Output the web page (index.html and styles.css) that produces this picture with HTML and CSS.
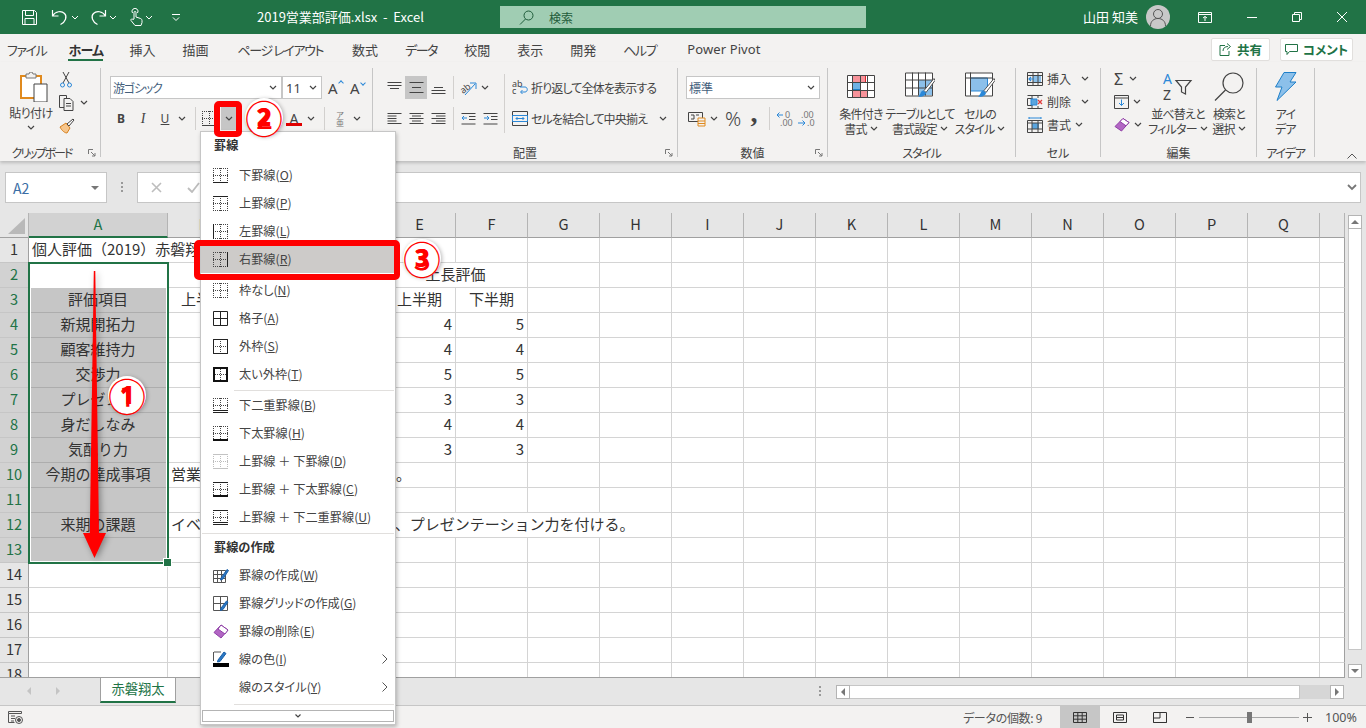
FILE: index.html
```html
<!DOCTYPE html>
<html lang="ja">
<head>
    <meta charset="UTF-8">
    <meta name="viewport" content="width=device-width, initial-scale=1.0">
    <title>2019営業部評価.xlsx - Excel</title>
    <link rel="stylesheet" href="styles.css">
</head>
<body>
<svg class="defs" width="0" height="0">
    <symbol id="chev" viewBox="0 0 8 5"><path d="M1 1l3 3 3-3" fill="none" stroke="#444" stroke-width="1.2"/></symbol>
    <symbol id="launch" viewBox="0 0 8 8"><path d="M.5 5V.5H5M3 3l4 4M7 4v3H4" fill="none" stroke="#777" stroke-width="1"/></symbol>
    <symbol id="dots" viewBox="0 0 15 15"><path d="M0 .5h15M0 14.500h15M.5 0v15M14.500 0v15M7.500 0v15M0 7.500h15" fill="none" stroke="#444" stroke-width="1" stroke-dasharray="1 1"/></symbol>
    <symbol id="alignlines" viewBox="0 0 15 12"><path d="M.5 .5h14M3 5.500h9M.5 10.500h14" fill="none" stroke="#444"/></symbol>
</svg>

<div class="app">
    <header class="titlebar">
        <div class="qat">
            <svg class="qat-save" width="17" height="17" viewBox="0 0 17 17" fill="none" stroke="#fff"><path d="M1.500 1.500h12l2 2v12h-14zM4.500 1.500v5h8v-5M4 15.500v-6h9v6"/></svg>
            <svg class="qat-undo" width="18" height="17" viewBox="0 0 18 17" fill="none" stroke="#fff" stroke-width="1.200"><path d="M1.500 1v6h6M1.500 7c3-5 9-5.500 12-2.500s1 8.500-4 11"/></svg>
            <svg class="caret qat-caret" width="8" height="5"><path d="M1 1l3 3 3-3" fill="none" stroke="#fff"/></svg>
            <svg class="qat-redo" width="18" height="17" viewBox="0 0 18 17" fill="none" stroke="#fff" stroke-width="1.200"><path d="M16.500 1v6h-6M16.500 7c-3-5-9-5.500-12-2.500s-1 8.500 4 11"/></svg>
            <svg class="caret qat-caret" width="8" height="5"><path d="M1 1l3 3 3-3" fill="none" stroke="#fff"/></svg>
            <svg class="qat-touch" width="14" height="18" viewBox="0 0 14 18" fill="none" stroke="#fff"><path d="M3.500 5a3 3 0 1 1 5 0M5 11V4.500a1 1 0 0 1 2 0V9l4.500 1.500c1 .5 1.500 1 1.500 2v2l-1 3H6l-4-5c-.5-1.500 1-2 2-1z"/></svg>
            <svg class="caret qat-caret" width="8" height="5"><path d="M1 1l3 3 3-3" fill="none" stroke="#fff"/></svg>
            <svg class="qat-custom" width="8" height="7" viewBox="0 0 8 7" fill="none" stroke="#fff"><path d="M0 .5h8M1 3.500l3 3 3-3"/></svg>
        </div>
        <div class="doc-title">2019営業部評価.xlsx &nbsp;- &nbsp;Excel</div>
        <div class="searchbox">
            <svg width="15" height="15" viewBox="0 0 15 15" fill="none" stroke="#1f5c3a"><circle cx="9.500" cy="5.500" r="4.500"/><path d="M6.500 9l-5.500 5.500"/></svg>
            <span>検索</span>
        </div>
        <div class="user">山田 知美</div>
        <div class="avatar">
            <svg width="24" height="24" viewBox="0 0 24 24" fill="none" stroke="#555"><circle cx="12" cy="9" r="4.500"/><path d="M4.500 21c0-5 3.500-7.500 7.500-7.500s7.500 2.500 7.500 7.500"/></svg>
        </div>
        <div class="winbtns">
            <svg width="14" height="11" viewBox="0 0 14 11" fill="none" stroke="#fff"><path d="M.5 .5h13v10H.5zM.5 2.500h13M7 9V4.500M5 6l2-1.500L9 6"/></svg>
            <svg width="10" height="1" viewBox="0 0 10 1" stroke="#fff"><path d="M0 .5h10"/></svg>
            <svg width="10" height="10" viewBox="0 0 10 10" fill="none" stroke="#fff"><path d="M.5 2.500h7v7h-7zM2.500 2.500v-2h7v7h-2"/></svg>
            <svg width="10" height="10" viewBox="0 0 10 10" fill="none" stroke="#fff"><path d="M0 0l10 10M10 0L0 10"/></svg>
        </div>
    </header>

    <nav class="tabs">
        <span class="tab kana">ファイル</span>
        <span class="tab active">ホーム</span>
        <span class="tab">挿入</span>
        <span class="tab">描画</span>
        <span class="tab kana pad2">ページ レイアウト</span>
        <span class="tab pad2">数式</span>
        <span class="tab kana">データ</span>
        <span class="tab">校閲</span>
        <span class="tab">表示</span>
        <span class="tab">開発</span>
        <span class="tab kana">ヘルプ</span>
        <span class="tab latin">Power Pivot</span>
        <div class="tab-actions">
            <button class="action share">
                <svg width="13" height="13" viewBox="0 0 13 13" fill="none" stroke="#217346"><path d="M6 2.500H1v10h9V8M4 8c0-3 2-4.500 5-4.500M8 .5l3.500 3L8 6.500"/></svg>
                共有
            </button>
            <button class="action comment">
                <svg width="13" height="13" viewBox="0 0 13 13" fill="none" stroke="#217346"><path d="M.5 1.500h12v7H4.500l-2.500 3v-3H.5z"/></svg>
                コメント
            </button>
        </div>
    </nav>

    <section class="ribbon">
        <div class="group g-clip">
            <div class="group-body clip-body">
                <div class="paste">
                    <svg class="paste-icon" width="28" height="30" viewBox="0 0 28 30" fill="none"><path d="M1 4h20v22H1z" fill="#fff" stroke="#e08a1e" stroke-width="2"/><path d="M6 4V2h3l1-2h2l1 2h3v4H6z" fill="#f3f2f1" stroke="#777"/><path d="M14 12h13v18H14z" fill="#fff" stroke="#444"/></svg>
                    <span class="lbl">貼り付け</span>
                    <svg class="caret" width="8" height="5"><use href="#chev"/></svg>
                </div>
                <div class="clip-side">
                    <div class="row-s"><svg width="14" height="16" viewBox="0 0 14 16" fill="none" stroke="#444"><path d="M4 0l6 11M10 0L4 11"/><circle cx="3.500" cy="13" r="2" stroke="#2b88d8"/><circle cx="10.500" cy="13" r="2" stroke="#2b88d8"/></svg></div>
                    <div class="row-s"><svg width="16" height="16" viewBox="0 0 16 16" fill="none" stroke="#444"><path d="M5 12.500H.5V.5h7v3M5 3.500h6l3 3v9H5zM7 8.500h5M7 11h5"/></svg><svg class="caret copy-caret" width="8" height="5"><use href="#chev"/></svg></div>
                    <div class="row-s"><svg width="16" height="16" viewBox="0 0 16 16" fill="none"><path d="M1 9l6-4 4 5-3 5c-2 0-5-2-7-6z" fill="#f6c58b" stroke="#d67f1c"/><path d="M8 6l6-5 1 1-5 6z" fill="#fff" stroke="#444"/></svg></div>
                </div>
            </div>
            <div class="group-label clip-label">クリップボード</div>
            <svg class="launcher" width="8" height="8"><use href="#launch"/></svg>
        </div>

        <div class="group g-font">
            <div class="group-body">
                <div class="rrow">
                    <div class="combo font-name"><span class="blue kana-t">游ゴシック</span><svg class="caret" width="8" height="5"><use href="#chev"/></svg></div>
                    <div class="combo font-size"><span>11</span><svg class="caret" width="8" height="5"><use href="#chev"/></svg></div>
                    <div class="grow-a">A<i class="up"></i></div>
                    <div class="grow-a small-a">A<i class="down"></i></div>
                </div>
                <div class="rrow font-row2">
                    <span class="btn serif-b">B</span>
                    <span class="btn serif-i">I</span>
                    <span class="btn under-u">U</span>
                    <span class="btn-c"><svg width="8" height="5"><use href="#chev"/></svg></span>
                    <span class="vsep sep-a"></span>
                    <span class="btn border-btn"><svg width="15" height="15"><use href="#dots"/><path d="M0 14.500h15" stroke="#444"/></svg></span>
                    <span class="border-drop"><svg width="8" height="5"><use href="#chev"/></svg></span>
                    <span class="btn fill-btn"><svg width="16" height="16" viewBox="0 0 16 16" fill="none" stroke="#666"><path d="M2 8l6-6 6 6-5 5z"/><path d="M1 15h3" stroke="#f4d03f" stroke-width="2"/></svg></span>
                    <span class="btn-c fill-drop"><svg width="8" height="5"><use href="#chev"/></svg></span>
                    <span class="btn font-color">A</span>
                    <span class="btn-c color-drop"><svg width="8" height="5"><use href="#chev"/></svg></span>
                    <span class="vsep sep-b"></span>
                    <span class="btn phonetic"><span>ア</span><span>亜</span></span>
                    <span class="btn-c"><svg width="8" height="5"><use href="#chev"/></svg></span>
                </div>
            </div>
            <div class="group-label">&nbsp;</div>
        </div>

        <div class="group g-align">
            <div class="group-body align-body">
                <div class="align-left">
                    <div class="rrow">
                        <span class="btn"><svg width="15" height="12" viewBox="0 0 15 12"><path d="M.5 .5h14M.5 3.500h14M3 6.500h9" fill="none" stroke="#444"/></svg></span>
                        <span class="btn on"><svg width="15" height="12"><use href="#alignlines"/></svg></span>
                        <span class="btn"><svg width="15" height="12" viewBox="0 0 15 12"><path d="M3 5.500h9M.5 8.500h14M.5 11.500h14" fill="none" stroke="#444"/></svg></span>
                        <span class="vsep sep-c"></span>
                        <span class="btn orient"><svg width="17" height="16" viewBox="0 0 17 16" fill="none"><text x="0" y="11" class="tiny" transform="rotate(-38 6 8)">ab</text><path d="M5 15L15 4M10 3h6v6" stroke="#2b88d8"/></svg></span>
                        <span class="btn-c"><svg width="8" height="5"><use href="#chev"/></svg></span>
                    </div>
                    <div class="rrow r2">
                        <span class="btn"><svg width="15" height="12" viewBox="0 0 15 12"><path d="M.5 .5h14M.5 5.500h9M.5 10.500h14M.5 3h9M.5 8h9" fill="none" stroke="#444"/></svg></span>
                        <span class="btn"><svg width="15" height="12" viewBox="0 0 15 12"><path d="M.5 .5h14M3 3h9M.5 5.500h14M3 8h9M.5 10.500h14" fill="none" stroke="#444"/></svg></span>
                        <span class="btn"><svg width="15" height="12" viewBox="0 0 15 12"><path d="M.5 .5h14M5 3h9.500M.5 5.500h14M5 8h9.500M.5 10.500h14" fill="none" stroke="#444"/></svg></span>
                        <span class="vsep sep-c"></span>
                        <span class="btn ind"><svg width="15" height="12" viewBox="0 0 15 12" fill="none"><path d="M.5 .5h14M8 3.500h6.500M8 6.500h6.500M.5 11h14" stroke="#444"/><path d="M6 5H1M3 3L1 5l2 2" stroke="#2b88d8"/></svg></span>
                        <span class="btn"><svg width="15" height="12" viewBox="0 0 15 12" fill="none"><path d="M.5 .5h14M8 3.500h6.500M8 6.500h6.500M.5 11h14" stroke="#444"/><path d="M1 5h5M4 3l2 2-2 2" stroke="#2b88d8"/></svg></span>
                    </div>
                </div>
                <span class="tallsep"></span>
                <div class="align-right">
                    <div class="rrow wrap-row">
                        <svg width="16" height="15" viewBox="0 0 16 15" fill="none"><text x="0" y="6.500" class="tiny">ab</text><text x="0" y="14" class="tiny">c</text><path d="M9 12h4c3 0 3-5 0-5H8M10.500 10L8.500 12l2 2" stroke="#2b88d8"/></svg>
                        <span class="lbl">折り返して全体を表示する</span>
                    </div>
                    <div class="rrow r2 wrap-row">
                        <svg width="16" height="15" viewBox="0 0 16 15" fill="none"><path d="M.5 .5h15v14H.5z" stroke="#444"/><path d="M.5 4.500h15v6H.5z" stroke="#2b88d8"/><path d="M4 7.500h8M5.500 6L4 7.500 5.500 9M10.500 6L12 7.500 10.500 9" stroke="#2b88d8"/></svg>
                        <span class="lbl">セルを結合して中央揃え</span>
                        <svg class="caret merge-caret" width="8" height="5"><use href="#chev"/></svg>
                    </div>
                </div>
            </div>
            <div class="group-label">配置</div>
            <svg class="launcher" width="8" height="8"><use href="#launch"/></svg>
        </div>

        <div class="group g-num">
            <div class="group-body">
                <div class="rrow"><div class="combo num-format"><span class="blue">標準</span><svg class="caret" width="8" height="5"><use href="#chev"/></svg></div></div>
                <div class="rrow r2 num-row2">
                    <span class="btn acct"><svg width="18" height="16" viewBox="0 0 18 16" fill="none"><path d="M.5 1.500h14v9H.5z" stroke="#444"/><path d="M3 4h3v4H3M8 4h3" stroke="#444"/><path d="M10 7h7v8h-7zM10 10h7M10 12.500h7" fill="#f3f2f1" stroke="#e08a1e"/></svg></span>
                    <span class="btn-c"><svg width="8" height="5"><use href="#chev"/></svg></span>
                    <span class="btn pct">%</span>
                    <span class="btn comma">,</span>
                    <span class="vsep sep-d"></span>
                    <span class="btn dec"><svg width="18" height="16" viewBox="0 0 18 16" fill="none"><path d="M7 4H1M3.500 1.500L1 4l2.500 2.500" stroke="#2b88d8"/><text x="9" y="7" class="tiny gray">0</text><text x="4" y="15" class="tiny gray">.00</text></svg></span>
                    <span class="btn dec"><svg width="18" height="16" viewBox="0 0 18 16" fill="none"><text x="4" y="7" class="tiny gray">.00</text><path d="M1 12h7M5.500 9.500L8 12l-2.500 2.500" stroke="#2b88d8"/><text x="10" y="15" class="tiny gray">.0</text></svg></span>
                </div>
            </div>
            <div class="group-label">数値</div>
            <svg class="launcher" width="8" height="8"><use href="#launch"/></svg>
        </div>

        <div class="group g-style">
            <div class="group-body bigs">
                <div class="big w-cond">
                    <svg width="28" height="23" viewBox="0 0 28 23" fill="none"><path d="M.5 .5h27v22H.5z" fill="#fff"/><path d="M5.500 .5h13v7h-13zM5.500 15.500h15v7h-15z" fill="#f7939a" stroke="#d9242c"/><path d="M5.500 7.500h8v7h-8z" fill="#6fb1e4" stroke="#1e7fc8"/><path d="M.5 .5h27v22H.5zM.5 7.500h27M.5 15.500h27M5.500 0v23M13.500 0v23M20.500 0v23" stroke="#444"/></svg>
                    <span>条件付き</span>
                    <span>書式<svg class="caret" width="8" height="5"><use href="#chev"/></svg></span>
                </div>
                <div class="big w-table">
                    <svg width="30" height="28" viewBox="0 0 30 28" fill="none"><path d="M.5 .5h27v23H.5z" fill="#fff"/><path d="M13 7.500h14v15H13z" fill="#8cc0ea"/><path d="M.5 .5h27v23H.5zM.5 7.500h27M.5 15.500h27M7.500 0v23M13.500 0v23M20.500 0v23" stroke="#444"/><path d="M29 6L19 18l2 2 9-12z" fill="#fff" stroke="#555"/><path d="M18 18c-3 1-2 4-5 6 4 1 8-1 8-4z" fill="#2b88d8"/></svg>
                    <span>テーブルとして</span>
                    <span>書式設定<svg class="caret" width="8" height="5"><use href="#chev"/></svg></span>
                </div>
                <div class="big w-cell">
                    <svg width="30" height="28" viewBox="0 0 30 28" fill="none"><path d="M.5 .5h27v23H.5z" fill="#fff"/><path d="M5.500 5.500h17v13h-17z" fill="#8cc0ea" stroke="#2b88d8"/><path d="M.5 .5h27v23H.5zM.5 5.500h27M5.500 0v23" stroke="#444"/><path d="M29 6L19 18l2 2 9-12z" fill="#fff" stroke="#555"/><path d="M18 18c-3 1-2 4-5 6 4 1 8-1 8-4z" fill="#2b88d8"/></svg>
                    <span>セルの</span>
                    <span>スタイル<svg class="caret" width="8" height="5"><use href="#chev"/></svg></span>
                </div>
            </div>
            <div class="group-label gk">スタイル</div>
        </div>

        <div class="group g-cell">
            <div class="group-body stack">
                <div class="srow">
                    <svg width="16" height="14" viewBox="0 0 16 14" fill="none"><path d="M6 3.500h8v7H6z" fill="#8cc0ea"/><path d="M.5 .5h15v13H.5zM.5 3.500h15M.5 10.500h15M6 0v14M11 0v14" stroke="#444"/><path d="M7 7H2M4 5L2 7l2 2" stroke="#2b88d8" stroke-width="1.200"/></svg>
                    <span class="lbl">挿入</span><svg class="caret cell-caret" width="8" height="5"><use href="#chev"/></svg>
                </div>
                <div class="srow">
                    <svg width="16" height="14" viewBox="0 0 16 14" fill="none"><path d="M.5 .5h15M.5 13.500h15M.5 3.500h5v7h-5zM5 0v3M5 11v3M11 0v3M11 11v3" stroke="#444"/><path d="M4 4h6v6H4z" fill="#5aa5de" stroke="#2b88d8"/><path d="M11 5l4 4M15 5l-4 4" stroke="#e03c3c" stroke-width="1.300"/></svg>
                    <span class="lbl">削除</span><svg class="caret cell-caret" width="8" height="5"><use href="#chev"/></svg>
                </div>
                <div class="srow">
                    <svg width="16" height="16" viewBox="0 0 16 16" fill="none"><path d="M5 6h7v6H5z" fill="#5aa5de"/><path d="M.5 3.500h15v12H.5zM.5 6h15M.5 12h15M5 3v13M11 3v13" stroke="#444"/><path d="M2 1h12M2 0v2M14 0v2" stroke="#2b88d8"/></svg>
                    <span class="lbl">書式</span><svg class="caret fmt-caret" width="8" height="5"><use href="#chev"/></svg>
                </div>
            </div>
            <div class="group-label">セル</div>
        </div>

        <div class="group g-edit">
            <div class="group-body edit-body">
                <div class="stack">
                    <div class="srow"><span class="sigma">Σ</span><svg class="caret sum-caret" width="8" height="5"><use href="#chev"/></svg></div>
                    <div class="srow"><svg width="15" height="14" viewBox="0 0 15 14" fill="none"><path d="M.5 .5h14v13H.5zM.5 3h14" stroke="#444"/><path d="M7.500 4.500v6M5 8l2.500 2.500L10 8" stroke="#2b88d8"/></svg><svg class="caret edit-caret" width="8" height="5"><use href="#chev"/></svg></div>
                    <div class="srow"><svg width="16" height="15" viewBox="0 0 16 15" fill="none"><path d="M1 9.500L9 1.500l6 4-7.500 8.500z" fill="#b266c4" stroke="#8f3ea6"/><path d="M6 4.500L9 1.500l6 4-3 3.300z" fill="#fff" stroke="#8f3ea6"/></svg><svg class="caret edit-caret" width="8" height="5"><use href="#chev"/></svg></div>
                </div>
                <div class="big w-sort">
                    <svg width="30" height="29" viewBox="0 0 30 29" fill="none"><text x="0" y="12" class="sort-a">A</text><text x="0" y="28" class="sort-z">Z</text><path d="M13 8.500h15l-5.500 6.500v7l-4 -2v-5z" stroke="#444" stroke-width="1.200"/></svg>
                    <span>並べ替えと</span>
                    <span>フィルター<svg class="caret" width="8" height="5"><use href="#chev"/></svg></span>
                </div>
                <div class="big w-find">
                    <svg width="30" height="29" viewBox="0 0 30 29" fill="none" stroke="#444" stroke-width="1.200"><circle cx="19" cy="11" r="10"/><path d="M11.500 18L1 28.500"/></svg>
                    <span>検索と</span>
                    <span>選択<svg class="caret" width="8" height="5"><use href="#chev"/></svg></span>
                </div>
            </div>
            <div class="group-label">編集</div>
        </div>

        <div class="group g-idea">
            <div class="group-body bigs idea-body">
                <div class="big w-idea">
                    <svg width="22" height="29" viewBox="0 0 22 29" fill="none"><path d="M9 .5h12L15 10h6L2 28.500 7 15H.5z" fill="#8cc0ea" stroke="#1e7fc8"/></svg>
                    <span>アイ</span>
                    <span>デア</span>
                </div>
            </div>
            <div class="group-label gk">アイデア</div>
        </div>
        <svg class="collapse" width="10" height="6" viewBox="0 0 10 6" fill="none" stroke="#555"><path d="M.5 5.500L5 1l4.500 4.500"/></svg>
    </section>

    <div class="formula">
        <div class="namebox"><span>A2</span><i class="tri-down"></i></div>
        <div class="fx-dots"></div>
        <div class="fx-input">
            <svg class="fx-x" width="11" height="11" viewBox="0 0 11 11" stroke="#bdbdbd" stroke-width="1.600"><path d="M1 1l9 9M10 1l-9 9"/></svg>
            <svg class="fx-ok" width="13" height="11" viewBox="0 0 13 11" fill="none" stroke="#bdbdbd" stroke-width="1.800"><path d="M1 6l4 4 7-9"/></svg>
            <svg class="fx-more" width="10" height="7" viewBox="0 0 10 7" fill="none" stroke="#777" stroke-width="1.800"><path d="M1 1l4 4 4-4"/></svg>
        </div>
    </div>

    <div class="sheet-wrap">
        <div class="sheet">
            <table class="grid">
                <colgroup><col class="c-h"><col class="c-a"><col span="16" class="c-n"><col class="c-r"></colgroup>
                <tr class="head"><th class="corner"><i></i></th><th class="hsel">A</th><th>B</th><th>C</th><th>D</th><th>E</th><th>F</th><th>G</th><th>H</th><th>I</th><th>J</th><th>K</th><th>L</th><th>M</th><th>N</th><th>O</th><th>P</th><th>Q</th><th></th></tr>
                <tr><th>1</th><td colspan="4">個人評価（2019）赤磐翔太</td><td></td><td></td><td></td><td></td><td></td><td></td><td></td><td></td><td></td><td></td><td></td><td></td><td></td><td></td></tr>
                <tr class="rsel"><th>2</th><td class="white"></td><td></td><td></td><td></td><td colspan="2" class="ctr">上長評価</td><td></td><td></td><td></td><td></td><td></td><td></td><td></td><td></td><td></td><td></td><td></td><td></td></tr>
                <tr class="rsel"><th>3</th><td class="ctr sel">評価項目</td><td class="ctr">上半期</td><td></td><td></td><td class="ctr">上半期</td><td class="ctr">下半期</td><td></td><td></td><td></td><td></td><td></td><td></td><td></td><td></td><td></td><td></td><td></td><td></td></tr>
                <tr class="rsel"><th>4</th><td class="ctr sel">新規開拓力</td><td></td><td></td><td></td><td class="num">4</td><td class="num">5</td><td></td><td></td><td></td><td></td><td></td><td></td><td></td><td></td><td></td><td></td><td></td><td></td></tr>
                <tr class="rsel"><th>5</th><td class="ctr sel">顧客維持力</td><td></td><td></td><td></td><td class="num">4</td><td class="num">4</td><td></td><td></td><td></td><td></td><td></td><td></td><td></td><td></td><td></td><td></td><td></td><td></td></tr>
                <tr class="rsel"><th>6</th><td class="ctr sel">交渉力</td><td></td><td></td><td></td><td class="num">5</td><td class="num">5</td><td></td><td></td><td></td><td></td><td></td><td></td><td></td><td></td><td></td><td></td><td></td><td></td></tr>
                <tr class="rsel"><th>7</th><td class="ctr sel">プレゼン力</td><td></td><td></td><td></td><td class="num">3</td><td class="num">3</td><td></td><td></td><td></td><td></td><td></td><td></td><td></td><td></td><td></td><td></td><td></td><td></td></tr>
                <tr class="rsel"><th>8</th><td class="ctr sel">身だしなみ</td><td></td><td></td><td></td><td class="num">4</td><td class="num">4</td><td></td><td></td><td></td><td></td><td></td><td></td><td></td><td></td><td></td><td></td><td></td><td></td></tr>
                <tr class="rsel"><th>9</th><td class="ctr sel">気配り力</td><td></td><td></td><td></td><td class="num">3</td><td class="num">3</td><td></td><td></td><td></td><td></td><td></td><td></td><td></td><td></td><td></td><td></td><td></td><td></td></tr>
                <tr class="rsel"><th>10</th><td class="ctr sel">今期の達成事項</td><td colspan="4">営業目標を達成し、新規開拓した。</td><td></td><td></td><td></td><td></td><td></td><td></td><td></td><td></td><td></td><td></td><td></td><td></td><td></td></tr>
                <tr class="rsel"><th>11</th><td class="sel"></td><td></td><td></td><td></td><td></td><td></td><td></td><td></td><td></td><td></td><td></td><td></td><td></td><td></td><td></td><td></td><td></td><td></td></tr>
                <tr class="rsel"><th>12</th><td class="ctr sel">来期の課題</td><td colspan="7">イベントなどに積極的に参加して、プレゼンテーション力を付ける。</td><td></td><td></td><td></td><td></td><td></td><td></td><td></td><td></td><td></td><td></td></tr>
                <tr class="rsel"><th>13</th><td class="sel"></td><td></td><td></td><td></td><td></td><td></td><td></td><td></td><td></td><td></td><td></td><td></td><td></td><td></td><td></td><td></td><td></td><td></td></tr>
                <tr><th>14</th><td></td><td></td><td></td><td></td><td></td><td></td><td></td><td></td><td></td><td></td><td></td><td></td><td></td><td></td><td></td><td></td><td></td><td></td></tr>
                <tr><th>15</th><td></td><td></td><td></td><td></td><td></td><td></td><td></td><td></td><td></td><td></td><td></td><td></td><td></td><td></td><td></td><td></td><td></td><td></td></tr>
                <tr><th>16</th><td></td><td></td><td></td><td></td><td></td><td></td><td></td><td></td><td></td><td></td><td></td><td></td><td></td><td></td><td></td><td></td><td></td><td></td></tr>
                <tr><th>17</th><td></td><td></td><td></td><td></td><td></td><td></td><td></td><td></td><td></td><td></td><td></td><td></td><td></td><td></td><td></td><td></td><td></td><td></td></tr>
                <tr><th>18</th><td></td><td></td><td></td><td></td><td></td><td></td><td></td><td></td><td></td><td></td><td></td><td></td><td></td><td></td><td></td><td></td><td></td><td></td></tr>
            </table>
            <div class="selection"><i></i></div>
        </div>
        <div class="vscroll">
            <span class="sbtn"><i class="tri-up"></i></span>
            <span class="vthumb"></span>
            <span class="sbtn"><i class="tri-down"></i></span>
        </div>
    </div>

    <div class="sheetbar">
        <div class="sheet-nav"><i class="tri-left"></i><i class="tri-right light"></i></div>
        <div class="sheet-tab">赤磐翔太</div>
        <div class="split-dots"></div>
        <div class="hscroll">
            <span class="sbtn"><i class="tri-left dark"></i></span>
            <span class="hthumb"></span>
            <span class="htrack"></span>
            <span class="sbtn"><i class="tri-right dark"></i></span>
        </div>
    </div>

    <footer class="status">
        <svg class="macro" width="15" height="13" viewBox="0 0 15 13" fill="none" stroke="#555"><path d="M.5 .5h13v2H.5zM.5 2.500v9h6M3 5h4M3 7.500h4M3 10h3"/><circle cx="11" cy="9" r="3.500"/><circle cx="11" cy="9" r="1.500" fill="#555"/></svg>
        <span class="count">データの個数: 9</span>
        <span class="view on"><svg width="14" height="11" viewBox="0 0 14 11" fill="none" stroke="#333"><path d="M.5 .5h13v10H.5zM.5 3.800h13M.5 7.200h13M4.800 0v11M9.200 0v11"/></svg></span>
        <span class="view"><svg width="14" height="11" viewBox="0 0 14 11" fill="none" stroke="#333"><path d="M.5 .5h13v10H.5zM3.500 3h7v5h-7zM3.500 5.500h7"/></svg></span>
        <span class="view"><svg width="14" height="11" viewBox="0 0 14 11" fill="none" stroke="#333"><path d="M.5 10.500v-10h13v10zM.5 10.500h13M7 .5V6H.5"/></svg></span>
        <span class="zoom-minus"></span>
        <span class="slider"><i></i></span>
        <span class="zoom-plus"></span>
        <span class="zoom-val">100%</span>
    </footer>

    <div class="menu">
        <div class="menu-head">罫線</div>
        <div class="mi"><svg width="15" height="15"><use href="#dots"/><path d="M0 14.500h15" stroke="#222"/></svg><span>下罫線(<u>O</u>)</span></div>
        <div class="mi"><svg width="15" height="15"><use href="#dots"/><path d="M0 .5h15" stroke="#222"/></svg><span>上罫線(<u>P</u>)</span></div>
        <div class="mi"><svg width="15" height="15"><use href="#dots"/><path d="M.5 0v15" stroke="#222"/></svg><span>左罫線(<u>L</u>)</span></div>
        <div class="mi hot"><svg width="15" height="15"><use href="#dots"/><path d="M14.500 0v15" stroke="#222"/></svg><span>右罫線(<u>R</u>)</span></div>
        <div class="mi after-hot"><svg width="15" height="15"><use href="#dots"/></svg><span>枠なし(<u>N</u>)</span></div>
        <div class="mi"><svg width="15" height="15" fill="none" stroke="#222"><path d="M.5 .5h14v14H.5zM7.500 0v15M0 7.500h15"/></svg><span>格子(<u>A</u>)</span></div>
        <div class="mi"><svg width="15" height="15"><use href="#dots"/><path d="M.5 .5h14v14H.5z" fill="none" stroke="#222"/></svg><span>外枠(<u>S</u>)</span></div>
        <div class="mi"><svg width="15" height="15"><use href="#dots"/><path d="M1 1h13v13H1z" fill="none" stroke="#111" stroke-width="2"/></svg><span>太い外枠(<u>T</u>)</span></div>
        <div class="msep tight"></div>
        <div class="mi"><svg width="15" height="15"><use href="#dots"/><path d="M0 12.500h15M0 14.500h15" stroke="#222"/></svg><span>下二重罫線(<u>B</u>)</span></div>
        <div class="mi"><svg width="15" height="15"><use href="#dots"/><path d="M0 14h15" stroke="#111" stroke-width="2"/></svg><span>下太罫線(<u>H</u>)</span></div>
        <div class="mi"><svg class="dim" width="15" height="15"><use href="#dots"/><path d="M0 .5h15M0 14.500h15" stroke="#555"/></svg><span>上罫線 ＋ 下罫線(<u>D</u>)</span></div>
        <div class="mi"><svg width="15" height="15"><use href="#dots"/><path d="M0 .5h15" stroke="#222"/><path d="M0 14h15" stroke="#111" stroke-width="2"/></svg><span>上罫線 ＋ 下太罫線(<u>C</u>)</span></div>
        <div class="mi"><svg width="15" height="15"><use href="#dots"/><path d="M0 .5h15M0 12.500h15M0 14.500h15" stroke="#222"/></svg><span>上罫線 ＋ 下二重罫線(<u>U</u>)</span></div>
        <div class="msep full"></div>
        <div class="menu-head second">罫線の作成</div>
        <div class="mi"><svg width="16" height="15" viewBox="0 0 16 15" fill="none"><path d="M.5 2.500h12v12H.5zM.5 6.500h12M.5 10.500h12M4.500 2v13M8.500 2v13" stroke="#555"/><path d="M8 10L14 1.500l1.500 1L10 11l-2.500 1z" fill="#2b78c4" stroke="#1a5fa8"/></svg><span>罫線の作成(<u>W</u>)</span></div>
        <div class="mi"><svg width="16" height="15" viewBox="0 0 16 15" fill="none"><path d="M.5 .5h14v14H.5zM7.500 0v15M0 7.500h15" stroke="#555"/><path d="M8 12l5.500-7 1.500 1L10 13.500 7.500 14.500z" fill="#2b78c4" stroke="#1a5fa8"/></svg><span>罫線グリッドの作成(<u>G</u>)</span></div>
        <div class="mi"><svg width="16" height="15" viewBox="0 0 16 15" fill="none"><path d="M1 8.500L8 1l7 5-7 8z" fill="#b266c4" stroke="#8f3ea6"/><path d="M5 5L8 1l7 5-3 4z" fill="#fff" stroke="#8f3ea6"/></svg><span>罫線の削除(<u>E</u>)</span></div>
        <div class="mi"><svg width="16" height="16" viewBox="0 0 16 16" fill="none"><path d="M1 1h7M.5 1v9" stroke="#555"/><path d="M5 9l6-8 2 1.500L7 10.500 4.500 11z" fill="#2b78c4" stroke="#1a5fa8"/><path d="M0 12h16v4H0z" fill="#000"/></svg><span>線の色(<u>I</u>)</span><svg class="sub" width="6" height="10" viewBox="0 0 6 10" fill="none" stroke="#555"><path d="M.5 .5L5 5 .5 9.500"/></svg></div>
        <div class="mi"><span class="noicon">線のスタイル(<u>Y</u>)</span><svg class="sub" width="6" height="10" viewBox="0 0 6 10" fill="none" stroke="#555"><path d="M.5 .5L5 5 .5 9.500"/></svg></div>
        <div class="msep"></div>
        <div class="menu-more"><svg width="6" height="4" viewBox="0 0 6 4" fill="none" stroke="#444" stroke-width="1.200"><path d="M.5 .5L3 3 5.500 .5"/></svg></div>
    </div>

    <div class="redbox box-drop"></div>
    <div class="redbox box-item"></div>
    <svg class="arrow" width="60" height="310" viewBox="64 262 60 310"><polygon points="93.800,271 95.300,271 99,533 106,533 94.500,558 83,533 89.800,533" fill="#ff0000"/></svg>
    <div class="badge b1" data-n="1">①</div>
    <div class="badge b2" data-n="2">②</div>
    <div class="badge b3" data-n="3">③</div>
</div>
</body>
</html>
```

FILE: styles.css
```css
* {
    box-sizing: border-box;
}
html, body {
    margin: 0;
    height: 728px;
    overflow: hidden;
}
body {
    font-family: "Noto Sans CJK JP", "Noto Sans", sans-serif;
    font-feature-settings: "palt";
    font-size: 12px;
    color: #444;
    background-color: #e6e6e6;
}
.defs {
    position: absolute;
}
.app {
    position: relative;
    width: 1366px;
    height: 728px;
    overflow: hidden;
}
svg {
    display: block;
    flex: none;
}
.tiny {
    font-family: "Noto Sans", sans-serif;
    font-size: 9px;
    fill: #444;
    stroke: none;
}
.tiny.gray {
    fill: #777;
}

/* title bar */
.titlebar {
    height: 34px;
    background-color: #217346;
    color: #fff;
    display: flex;
    align-items: center;
}
.qat {
    width: 257px;
    padding-left: 21px;
    display: flex;
    align-items: center;
}
.qat-undo { margin-left: 13px; }
.qat-caret { margin-left: 2px; }
.qat-redo { margin-left: 10px; }
.qat-touch { margin-left: 12px; }
.qat-custom { margin-left: 19px; }
.doc-title {
    width: 243px;
    font-size: 13px;
    font-feature-settings: normal;
    padding-bottom: 2px;
}
.searchbox {
    width: 366px;
    height: 22px;
    background-color: #a0cdb3;
    color: #1f5c3a;
    display: flex;
    align-items: center;
    padding-left: 19px;
    gap: 15px;
}
.user {
    margin-left: 217px;
    width: 63px;
    font-size: 13px;
    padding-bottom: 2px;
}
.avatar {
    width: 24px;
    height: 24px;
    border-radius: 50%;
    background-color: #c8c8c8;
    overflow: hidden;
}
.winbtns {
    margin-left: 28px;
    display: flex;
    align-items: center;
    gap: 35px;
}

/* tabs */
.tabs {
    height: 28px;
    background-color: #f3f2f1;
    display: flex;
    padding-left: 7px;
    gap: 27px;
    position: relative;
}
.tab {
    font-size: 13px;
    line-height: 31px;
    height: 28px;
    white-space: nowrap;
}
.tab.kana {
    letter-spacing: -1.400px;
}
.tab.pad2 {
    margin-left: 2px;
}
.tab.active {
    font-weight: bold;
    color: #333;
    margin-left: -5px;
    margin-right: -1px;
    border-bottom: 2px solid #217346;
    height: 27px;
    letter-spacing: -0.700px;
}
.tab.latin {
    font-family: "Noto Sans", sans-serif;
    margin-left: 4px;
    letter-spacing: 0.100px;
}
.tab-actions {
    margin-left: auto;
    margin-right: 13px;
    margin-top: 4px;
    display: flex;
    gap: 10px;
}
.action {
    height: 23px;
    background-color: #fff;
    border: 1px solid #e1dfdd;
    border-radius: 2px;
    color: #217346;
    font: bold 12.500px "Noto Sans CJK JP", sans-serif;
    font-feature-settings: "palt";
    display: flex;
    align-items: center;
    gap: 5px;
    padding: 0;
    justify-content: center;
}
.share { width: 59px; }
.comment { width: 73px; }

/* ribbon */
.ribbon {
    height: 99px;
    background-color: #f3f2f1;
    display: flex;
    position: relative;
    box-shadow: 0 2px 3px rgba(0,0,0,0.18);
    z-index: 1;
}
.group {
    height: 89px;
    display: flex;
    flex-direction: column;
    border-right: 1px solid #c6c6c6;
    margin-top: 6px;
    position: relative;
    flex: none;
}
.group-body {
    flex: 1;
    padding-top: 8px;
    min-height: 0;
}
.group-label {
    height: 13px;
    line-height: 17px;
    text-align: center;
    white-space: nowrap;
}
.gk {
    letter-spacing: -1.200px;
}
.clip-label {
    letter-spacing: -2px;
    padding-right: 17px;
}
.launcher {
    position: absolute;
    right: 4px;
    bottom: 0;
}
.g-clip { width: 101px; }
.g-font { width: 272px; }
.g-align { width: 305px; }
.g-num { width: 150px; }
.g-style { width: 188px; }
.g-cell { width: 85px; }
.g-edit { width: 156px; }
.g-idea { width: 58px; }
.g-font .group-body { padding-left: 9px; }
.g-font .group-label { visibility: hidden; }
.rrow {
    display: flex;
    align-items: center;
    height: 23px;
}
.r2,
.font-row2 {
    margin-top: 8px;
}
.btn {
    width: 22px;
    height: 23px;
    display: flex;
    align-items: center;
    justify-content: center;
    flex: none;
}
.btn.on {
    background-color: #c6c6c6;
}
.btn-c {
    width: 12px;
    height: 23px;
    display: flex;
    align-items: center;
    justify-content: center;
    flex: none;
}
.vsep {
    width: 1px;
    height: 23px;
    background-color: #d2d0ce;
    flex: none;
}
.caret {
    display: inline-block;
}
.blue {
    color: #44607c;
}
.kana-t {
    letter-spacing: -1.200px;
}
.lbl {
    white-space: nowrap;
}

/* clipboard */
.clip-body {
    display: flex;
    padding-top: 0;
}
.paste {
    width: 62px;
    padding-top: 4px;
    display: flex;
    flex-direction: column;
    align-items: center;
}
.paste-icon {
    margin-left: 5px;
}
.paste .lbl {
    margin-top: 3px;
    line-height: 16px;
    letter-spacing: -0.500px;
}
.paste .caret {
    margin-top: 4px;
}
.clip-side {
    margin-left: -3px;
}
.row-s {
    height: 23px;
    display: flex;
    align-items: center;
}
.copy-caret {
    margin-left: 5px;
}

/* font */
.combo {
    height: 23px;
    background-color: #fff;
    border: 1px solid #c6c6c6;
    display: flex;
    align-items: center;
    justify-content: space-between;
    padding: 0 4px 0 2px;
    flex: none;
}
.font-name { width: 172px; }
.font-size { width: 40px; padding-left: 3px; font-size: 13px; font-family: "Noto Sans", sans-serif; }
.grow-a {
    position: relative;
    width: 22px;
    margin-left: 6px;
    font-family: "Noto Sans", sans-serif;
    font-size: 15px;
}
.small-a { margin-left: 0; }
.grow-a i {
    position: absolute;
    left: 11px;
    top: 3px;
    width: 4px;
    height: 4px;
    border-left: 1px solid #2b88d8;
    border-top: 1px solid #2b88d8;
    transform: rotate(45deg);
}
.grow-a i.down {
    transform: rotate(225deg);
}
.serif-b { font-weight: bold; font-family: "Noto Sans", sans-serif; }
.serif-i { font-style: italic; font-family: "Liberation Serif", serif; font-size: 14px; }
.under-u { text-decoration: underline; font-family: "Noto Sans", sans-serif; }
.sep-a { margin-left: 7px; }
.border-btn { margin-left: 2px; }
.border-drop {
    width: 16px;
    height: 23px;
    background-color: #c6c6c6;
    display: flex;
    align-items: center;
    justify-content: center;
    margin-left: 1px;
    flex: none;
}
.fill-btn { margin-left: 12px; }
.fill-drop { margin-left: -2px; }
.font-color {
    color: #444;
    font-family: "Noto Sans", sans-serif;
    font-size: 14px;
    line-height: 17px;
    margin-left: 3px;
    position: relative;
    width: 20px;
}
.font-color::after {
    content: "";
    position: absolute;
    left: 2px;
    right: 2px;
    bottom: 4px;
    height: 3px;
    background-color: #e00000;
}
.color-drop { margin-left: 1px; }
.sep-b { margin-left: 7px; }
.phonetic {
    flex-direction: column;
    margin-left: 4px;
    font-size: 8px;
    line-height: 8px;
    color: #777;
}

/* alignment */
.align-body {
    display: flex;
    padding-left: 10px;
}
.align-left {
    width: 121px;
}
.sep-c { margin-left: 4px; margin-right: 3px; }
.tallsep {
    width: 1px;
    height: 59px;
    margin-top: -2px;
    background-color: #d2d0ce;
    flex: none;
}
.align-right {
    padding-left: 7px;
}
.wrap-row {
    gap: 3px;
}
.wrap-row .lbl {
    letter-spacing: -0.850px;
}
.merge-caret {
    margin-left: 9px;
}

/* number */
.g-num .group-body {
    padding-left: 8px;
}
.num-format {
    width: 134px;
}
.pct {
    font-size: 20px;
    font-weight: 300;
    font-family: "Noto Sans", sans-serif;
    width: 26px;
}
.comma {
    font-size: 28px;
    font-weight: bold;
    font-family: "Liberation Serif", serif;
    width: 16px;
    padding-bottom: 11px;
}
.sep-d { margin-left: 7px; margin-right: 4px; }
.dec { width: 21px; }

/* big buttons */
.bigs {
    display: flex;
    padding-top: 4px;
}
.big {
    display: flex;
    flex-direction: column;
    align-items: center;
    line-height: 15px;
    white-space: nowrap;
    flex: none;
    letter-spacing: -0.800px;
}
.big > svg {
    margin-bottom: 5px;
    height: 29px;
}
.big span {
    display: flex;
    align-items: center;
    gap: 3px;
}
.g-style .bigs { padding-left: 8px; }
.w-cond { width: 50px; margin-right: 1px; }
.w-table { width: 66px; margin-right: 2px; }
.w-cell { width: 50px; }
.w-sort { width: 58px; }
.w-find { width: 42px; margin-left: 1px; }
.w-idea { width: 57px; }

/* cells, editing */
.stack {
    padding-top: 0;
    margin-top: -1px;
}
.srow {
    height: 23px;
    display: flex;
    align-items: center;
}
.g-cell .stack {
    padding-left: 11px;
}
.srow .lbl {
    margin-left: 4px;
}
.cell-caret { margin-left: 10px; }
.fmt-caret { margin-left: 4px; }
.edit-body {
    display: flex;
    padding-top: 0;
}
.edit-body .stack {
    width: 48px;
    padding-left: 13px;
}
.sigma {
    font-size: 16px;
    line-height: 16px;
    font-family: "Noto Sans", sans-serif;
}
.sum-caret { margin-left: 6px; }
.edit-caret { margin-left: 4px; }
.edit-body .big {
    padding-top: 4px;
}
.sort-a {
    font: 14px "Noto Sans", sans-serif;
    fill: #2b88d8;
}
.sort-z {
    font: 14px "Noto Sans", sans-serif;
    fill: #444;
}
.collapse {
    position: absolute;
    left: 1347px;
    top: 91px;
}

/* formula bar */
.formula {
    height: 52px;
    background-color: #e6e6e6;
    display: flex;
    padding: 11px 5px 0;
}
.namebox {
    width: 102px;
    height: 31px;
    background-color: #fff;
    border: 1px solid #c6c6c6;
    display: flex;
    align-items: center;
    justify-content: space-between;
    padding: 0 7px;
    font-size: 14px;
    color: #3a6ea5;
}
.namebox .tri-down {
    border-top-color: #777;
}
.fx-dots {
    width: 2px;
    height: 10px;
    margin: 10px 14px 0;
    background-image: repeating-linear-gradient(#999 0 2px, transparent 2px 4px);
}
.fx-input {
    flex: 1;
    height: 31px;
    background-color: #fff;
    border: 1px solid #c6c6c6;
    display: flex;
    align-items: center;
    padding-left: 13px;
}
.fx-ok { margin-left: 25px; }
.fx-more { margin-left: auto; margin-right: 3px; }

/* sheet */
.sheet-wrap {
    height: 465px;
    display: flex;
}
.sheet {
    width: 1345px;
    height: 465px;
    overflow: hidden;
    position: relative;
    border-bottom: 1px solid #a0a0a0;
}
.grid {
    border-collapse: separate;
    border-spacing: 0;
    table-layout: fixed;
    width: 1345px;
    background-color: #fff;
    font-feature-settings: normal;
    font-size: 15px;
    color: #333;
}
.c-h { width: 29px; }
.c-a { width: 139px; }
.c-n { width: 72px; }
.c-r { width: 25px; }
.grid th,
.grid td {
    height: 25px;
    padding: 0 0 2px;
    white-space: nowrap;
    overflow: hidden;
    font-weight: normal;
}
.grid td {
    border-right: 1px solid #d4d4d4;
    border-bottom: 1px solid #d4d4d4;
    padding: 0 3px 3px;
    line-height: 20px;
}
.grid td:last-child {
    border-right: 1px solid #a0a0a0;
}
.grid th {
    background-color: #e6e6e6;
    border-right: 1px solid #a0a0a0;
    border-bottom: 1px solid #c6c6c6;
    font-size: 14.600px;
    line-height: 20px;
    color: #333;
}
.head th {
    border-right: 1px solid #b4b4b4;
    border-bottom: 1px solid #a0a0a0;
}
.head .hsel {
    background-color: #d2d2d2;
    color: #217346;
    border-bottom: 2px solid #217346;
}
.corner {
    position: relative;
}
.corner i {
    position: absolute;
    left: 8px;
    bottom: 3px;
    width: 0;
    height: 0;
    border-left: 17px solid transparent;
    border-bottom: 16px solid #b9b9b9;
}
.rsel th {
    background-color: #d2d2d2;
    color: #217346;
}
.grid td.sel {
    background-color: #c6c6c6;
    border-bottom-color: #adadad;
    border-right-color: #adadad;
}
.grid td.white {
    border-right-color: transparent;
    border-bottom-color: transparent;
}
.ctr { text-align: center; }
.num { text-align: right; }
.selection {
    position: absolute;
    left: 28px;
    top: 49px;
    width: 141px;
    height: 302px;
    border: 2px solid #217346;
    box-shadow: inset 0 0 0 1px #fff;
}
.selection i {
    position: absolute;
    right: -5px;
    bottom: -5px;
    width: 7px;
    height: 7px;
    background-color: #217346;
    border: 1px solid #fff;
    box-sizing: content-box;
}
.vscroll {
    width: 21px;
    padding: 2px 4px 0 3px;
    display: flex;
    flex-direction: column;
}
.sbtn {
    width: 14px;
    height: 14px;
    background-color: #fff;
    border: 1px solid #b4b4b4;
    display: flex;
    align-items: center;
    justify-content: center;
    flex: none;
}
.vthumb {
    flex: 1;
    background-color: #fff;
    border: 1px solid #c6c6c6;
    border-top: 0;
    margin-bottom: 14px;
}
.tri-up, .tri-down, .tri-left, .tri-right {
    width: 0;
    height: 0;
    display: block;
}
.tri-up {
    border: 4px solid transparent;
    border-top: 0;
    border-bottom: 4px solid #777;
}
.tri-down {
    border: 4px solid transparent;
    border-bottom: 0;
    border-top: 4px solid #777;
}
.tri-left {
    border: 4px solid transparent;
    border-left: 0;
    border-right: 4px solid #c4c4c4;
}
.tri-right {
    border: 4px solid transparent;
    border-right: 0;
    border-left: 4px solid #c4c4c4;
}
.tri-left.dark { border-right-color: #777; }
.tri-right.dark { border-left-color: #777; }

/* sheet tabs */
.sheetbar {
    height: 28px;
    background-color: #e6e6e6;
    display: flex;
    position: relative;
    border-bottom: 1px solid #c6c6c6;
}
.sheet-nav {
    width: 100px;
    padding: 9px 0 0 27px;
    display: flex;
    gap: 25px;
}
.sheet-tab {
    width: 76px;
    height: 25px;
    background-color: #fff;
    color: #217346;
    text-align: center;
    line-height: 22px;
    font-size: 13.300px;
    font-feature-settings: normal;
    border-left: 1px solid #a0a0a0;
    border-right: 1px solid #a0a0a0;
    border-bottom: 2px solid #217346;
}
.split-dots {
    width: 2px;
    height: 10px;
    margin: 8px 0 0 643px;
    background-image: repeating-linear-gradient(#999 0 2px, transparent 2px 4px);
}
.hscroll {
    position: absolute;
    left: 836px;
    top: 7px;
    width: 508px;
    height: 14px;
    display: flex;
}
.hthumb {
    width: 450px;
    background-color: #fff;
    border: 1px solid #c6c6c6;
    border-left: 0;
}
.htrack {
    flex: 1;
    background-color: #d6d6d6;
}

/* status bar */
.status {
    height: 22px;
    background-color: #f3f2f1;
    display: flex;
    align-items: center;
    padding-left: 8px;
    font-size: 12px;
    color: #555;
}
.macro {
    margin-right: 940px;
}
.count {
    width: 97px;
    white-space: nowrap;
    letter-spacing: -0.300px;
}
.view {
    width: 40px;
    height: 22px;
    display: flex;
    align-items: center;
    justify-content: center;
}
.view.on {
    background-color: #c6c6c6;
}
.zoom-minus {
    width: 8px;
    height: 1px;
    background-color: #555;
    margin-left: 6px;
}
.slider {
    width: 100px;
    height: 1px;
    background-color: #a6a6a6;
    margin-left: 5px;
    position: relative;
}
.slider i {
    position: absolute;
    left: 48px;
    top: -5px;
    width: 5px;
    height: 11px;
    background-color: #777;
}
.zoom-plus {
    width: 9px;
    height: 9px;
    margin-left: 4px;
    background:
        linear-gradient(#555, #555) center / 9px 1px no-repeat,
        linear-gradient(#555, #555) center / 1px 9px no-repeat;
}
.zoom-val {
    margin-left: 13px;
    font-family: "Noto Sans", sans-serif;
    font-size: 12.500px;
}

/* borders menu */
.menu {
    position: absolute;
    left: 200px;
    top: 131px;
    width: 196px;
    height: 594px;
    background-color: #fff;
    border: 1px solid #c6c6c6;
    box-shadow: 1px 2px 4px rgba(0,0,0,0.25);
    z-index: 3;
    font-size: 12.200px;
}
.menu-head {
    height: 29px;
    line-height: 27px;
    padding-left: 13px;
    font-weight: bold;
    color: #333;
}
.menu-head.second {
    height: 27px;
}
.mi {
    height: 28px;
    display: grid;
    grid-template-columns: 26px 1fr;
    align-items: center;
    padding-left: 12px;
    white-space: nowrap;
    position: relative;
}
.mi u {
    text-underline-offset: 1px;
}
.mi.hot {
    background-color: #cdcbc9;
}
.mi.after-hot {
    margin-top: 3px;
}
.dim {
    opacity: 0.35;
}
.noicon {
    grid-column: 2;
}
.sub {
    position: absolute;
    right: 7px;
    top: 9px;
}
.msep {
    height: 1px;
    background-color: #e1dfdd;
    margin: 3px 1px 0 33px;
}
.msep.tight {
    margin-top: 2px;
}
.msep.full {
    margin: 2px 1px 0;
}
.menu-more {
    margin: 5px 1px 0;
    height: 12px;
    border: 1px solid #b4b4b4;
    display: flex;
    align-items: center;
    justify-content: center;
}

/* annotations */
.redbox {
    position: absolute;
    border: 6px solid #ff0000;
    border-radius: 5px;
    z-index: 4;
}
.box-drop {
    left: 214px;
    top: 101px;
    width: 28px;
    height: 36px;
}
.box-item {
    left: 194px;
    top: 240px;
    width: 206px;
    height: 40px;
}
.arrow {
    position: absolute;
    left: 64px;
    top: 262px;
    z-index: 2;
    filter: drop-shadow(2px 2px 3px rgba(0,0,0,0.35));
}
.badge {
    position: absolute;
    width: 38px;
    height: 38px;
    border-radius: 50%;
    background-color: #fff;
    color: #ff0000;
    font-size: 38px;
    line-height: 38px;
    text-align: center;
    box-shadow: 1px 1px 4px rgba(0,0,0,0.3);
    z-index: 5;
    font-feature-settings: normal;
}
.badge::after {
    content: attr(data-n);
    position: absolute;
    left: 0;
    right: 0;
    top: 0;
    font-family: "Noto Sans", sans-serif;
    font-size: 24px;
    font-weight: 900;
    line-height: 38px;
}
.b1 { left: 108px; top: 376px; }
.b2 { left: 245px; top: 98px; }
.b3 { left: 403px; top: 239px; }
```
